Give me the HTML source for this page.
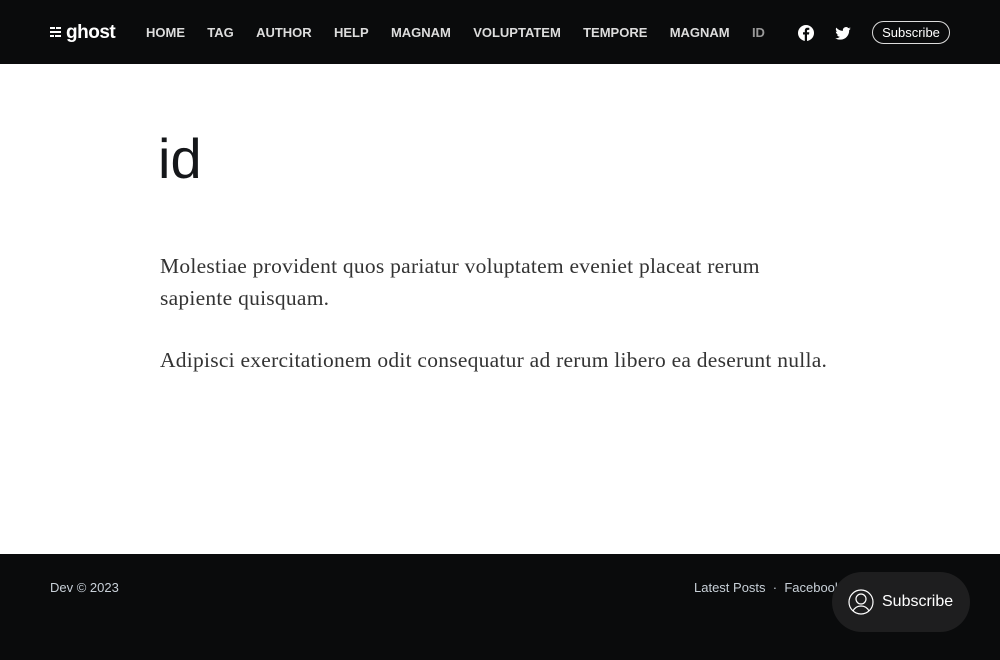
<!DOCTYPE html>
<html><head><meta charset="utf-8"><style>
*{margin:0;padding:0;box-sizing:border-box}
body{width:1000px;height:660px;background:#fff;font-family:"Liberation Sans",sans-serif;position:relative;overflow:hidden}
header{position:absolute;top:0;left:0;width:1000px;height:64px;background:#0a0b0c}
.logo{position:absolute;left:66px;top:21px;color:#fff;font-weight:bold;font-size:19px;letter-spacing:-0.5px;line-height:24px}
.lb{position:absolute;height:2px;background:#fff}
nav{position:absolute;left:146px;top:25px;font-size:13px;font-weight:bold;color:#ddd;white-space:nowrap}
nav span{margin-right:22.3px}
.soc{position:absolute;top:25px}
.sub{position:absolute;left:872px;top:21px;width:78px;height:23px;border:1px solid #ddd;border-radius:12px;color:#fff;font-size:13px;text-align:center;line-height:21px}
h1{position:absolute;left:158px;top:126px;font-size:56px;font-weight:normal;color:#15171a}
.c{position:absolute;left:160px;top:250px;width:625px;font-family:"Liberation Serif",serif;font-size:21.5px;letter-spacing:0.25px;line-height:32px;color:#333}
.c p{margin-bottom:30px}
footer{position:absolute;top:554px;left:0;width:1000px;height:106px;background:#0a0b0c;font-size:13px;color:#c8d0d8}
.cp{position:absolute;left:50px;top:26px}
.fl{position:absolute;left:694px;top:26px;white-space:nowrap}
.pill{position:absolute;left:832px;top:572px;width:138px;height:60px;border-radius:30px;background:#1e1e1f;color:#fff;font-size:16px}
</style></head><body>
<header>
<div class="lb" style="left:50px;top:27px;width:5px"></div><div class="lb" style="left:56px;top:27px;width:5px"></div>
<div class="lb" style="left:50px;top:31px;width:11px"></div>
<div class="lb" style="left:50px;top:35px;width:4px"></div><div class="lb" style="left:55px;top:35px;width:6px"></div>
<div class="logo">ghost</div>
<nav><span>HOME</span><span>TAG</span><span>AUTHOR</span><span>HELP</span><span>MAGNAM</span><span>VOLUPTATEM</span><span>TEMPORE</span><span>MAGNAM</span><span style="color:#999">ID</span></nav>
<svg class="soc" style="left:798px" width="16" height="16" viewBox="0 0 16 16"><circle cx="8" cy="8" r="8" fill="#fff"/><path d="M9 16V9.5h2l.3-2.3H9V5.9c0-.6.2-1 1.1-1h1.2V2.9c-.2 0-.9-.1-1.7-.1-1.7 0-2.8 1-2.8 2.9v1.5H5v2.3h1.8V16z" fill="#0a0b0c"/></svg>
<svg class="soc" style="left:835px;top:27px" width="16" height="13" viewBox="0 0 24 20"><path d="M24 2.4c-.9.4-1.8.7-2.8.8 1-.6 1.8-1.6 2.2-2.7-1 .6-2 1-3.1 1.2A4.9 4.9 0 0 0 11.9 6 14 14 0 0 1 1.7.9a4.9 4.9 0 0 0 1.5 6.6c-.8 0-1.6-.3-2.2-.6 0 2.4 1.7 4.4 3.9 4.8-.7.2-1.5.2-2.2.1.6 2 2.4 3.4 4.6 3.4A9.9 9.9 0 0 1 0 17.3 14 14 0 0 0 7.5 19.5c9.1 0 14-7.5 14-14v-.6c1-.7 1.8-1.6 2.5-2.5z" fill="#fff"/></svg>
<div class="sub">Subscribe</div>
</header>
<h1>id</h1>
<div class="c"><p>Molestiae provident quos pariatur voluptatem eveniet placeat rerum sapiente quisquam.</p><p style="width:700px">Adipisci exercitationem odit consequatur ad rerum libero ea deserunt nulla.</p></div>
<footer><div class="cp">Dev © 2023</div><div class="fl">Latest Posts &nbsp;·&nbsp; Facebook</div></footer>
<div class="pill"><svg style="position:absolute;left:16px;top:17px" width="26" height="26" viewBox="0 0 26 26" fill="none" stroke="#fff" stroke-width="1.2"><circle cx="13" cy="13" r="12"/><circle cx="13" cy="10" r="5"/><path d="M5 22c2-4 5-5 8-5s6 1 8 5"/></svg><span style="position:absolute;left:50px;top:21px">Subscribe</span></div>
</body></html>
